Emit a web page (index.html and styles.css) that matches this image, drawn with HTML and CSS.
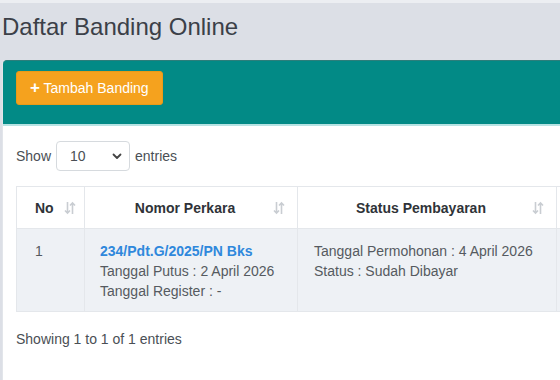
FILE: index.html
```html
<!DOCTYPE html>
<html lang="en">
<head>
  <meta charset="UTF-8">
  <meta name="viewport" content="width=device-width, initial-scale=1.0">
  <title>Daftar Banding Online</title>
  <link rel="stylesheet" href="styles.css">
</head>
<body>
  <div class="page">
    <h1 class="page-title">Daftar Banding Online</h1>
    <div class="card">
      <div class="card-header">
        <button class="btn-add"><span class="plus">+</span> Tambah Banding</button>
      </div>
      <div class="card-body">
        <div class="length">
          <label>Show</label>
          <div class="select">
            <span>10</span>
            <svg width="10" height="7" viewBox="0 0 10 7"><path d="M1.5 1.5 L5 5 L8.5 1.5" fill="none" stroke="#444" stroke-width="1.8" stroke-linecap="round" stroke-linejoin="round"/></svg>
          </div>
          <label>entries</label>
        </div>

        <table class="data-table">
          <colgroup>
            <col style="width:68px">
            <col style="width:213px">
            <col style="width:259px">
            <col style="width:160px">
          </colgroup>
          <thead>
            <tr>
              <th><div class="th-inner left"><span class="label">No</span><svg class="sort" width="12" height="14" viewBox="0 0 12 14"><path d="M3.5 1 V12 M1 9.5 L3.5 12 L6 9.5 M8.5 13 V2 M6 4.5 L8.5 2 L11 4.5" fill="none" stroke="#c9cdd2" stroke-width="1.6"/></svg></div></th>
              <th><div class="th-inner"><span class="label">Nomor Perkara</span><svg class="sort" width="12" height="14" viewBox="0 0 12 14"><path d="M3.5 1 V12 M1 9.5 L3.5 12 L6 9.5 M8.5 13 V2 M6 4.5 L8.5 2 L11 4.5" fill="none" stroke="#c9cdd2" stroke-width="1.6"/></svg></div></th>
              <th><div class="th-inner"><span class="label">Status Pembayaran</span><svg class="sort" width="12" height="14" viewBox="0 0 12 14"><path d="M3.5 1 V12 M1 9.5 L3.5 12 L6 9.5 M8.5 13 V2 M6 4.5 L8.5 2 L11 4.5" fill="none" stroke="#c9cdd2" stroke-width="1.6"/></svg></div></th>
              <th></th>
            </tr>
          </thead>
          <tbody>
            <tr>
              <td class="num">1</td>
              <td>
                <a href="#" class="case-link">234/Pdt.G/2025/PN Bks</a><br>
                Tanggal Putus : 2 April 2026<br>
                Tanggal Register : -
              </td>
              <td class="status">
                Tanggal Permohonan : 4 April 2026<br>
                Status : Sudah Dibayar
              </td>
              <td></td>
            </tr>
          </tbody>
        </table>

        <div class="info">Showing 1 to 1 of 1 entries</div>
      </div>
    </div>
  </div>
</body>
</html>
```

FILE: styles.css
```css
body {
  margin: 0;
  font-family: "Liberation Sans", Arial, sans-serif;
  background: #dcdfe6;
  color: #555a60;
  overflow: hidden;
}
.page {
  border-top: 3px solid #eceef2;
  padding-left: 2px;
  width: 760px;
}
.page-title {
  margin: 0;
  height: 57px;
  line-height: 48px;
  font-size: 24px;
  font-weight: normal;
  color: #3b4048;
}
.card {
  background: #fff;
  border-left: 1px solid #e2e5ea;
  border-top-left-radius: 4px;
}
.card-header {
  background: #028a86;
  border-top: 1px solid #2d7e7b;
  border-top-left-radius: 4px;
  border-bottom: 2px solid #b7e3e3;
  padding: 10px 13px;
  height: 43px;
}
.btn-add {
  background: #f5a21e;
  color: #fff;
  border: 1px solid #eb9a16;
  border-radius: 3px;
  height: 34px;
  padding: 0 13px;
  font-family: inherit;
  font-size: 14px;
}
.btn-add .plus {
  font-weight: bold;
  font-size: 17px;
}
.card-body {
  padding: 15px 13px 0;
}
.length {
  display: flex;
  align-items: center;
  gap: 5px;
  font-size: 14px;
  color: #4a4f55;
}
.select {
  width: 74px;
  height: 30px;
  box-sizing: border-box;
  border: 1px solid #d6dade;
  border-radius: 4px;
  display: flex;
  align-items: center;
  justify-content: space-between;
  padding: 0 7px 0 13px;
  color: #4a4f55;
}
.data-table {
  margin-top: 15px;
  border-collapse: collapse;
  table-layout: fixed;
  width: 700px;
  font-size: 14px;
}
.data-table th {
  background: #fff;
  border: 1px solid #e4e7eb;
  height: 41px;
  padding: 0 12px 0 16px;
  color: #2f3338;
  font-weight: bold;
}
.th-inner {
  display: flex;
  align-items: center;
}
.th-inner .label {
  flex: 1;
  text-align: center;
  padding-right: 4px;
}
.th-inner.left .label {
  flex: none;
  text-align: left;
  padding-left: 2px;
  padding-right: 0;
  margin-right: 10px;
}
.sort {
  flex: none;
}
.data-table td {
  background: #eef1f5;
  border: 1px solid #e4e7eb;
  vertical-align: top;
  padding: 12px 15px 10px;
  line-height: 20px;
  color: #555a60;
  height: 58px;
}
.data-table td.num {
  padding-left: 18px;
}
.data-table td.status {
  padding-left: 16px;
}
.case-link {
  color: #2f88dc;
  font-weight: bold;
  text-decoration: none;
}
.info {
  padding: 19px 0 40px;
  font-size: 14px;
  color: #4a4f55;
}
```
